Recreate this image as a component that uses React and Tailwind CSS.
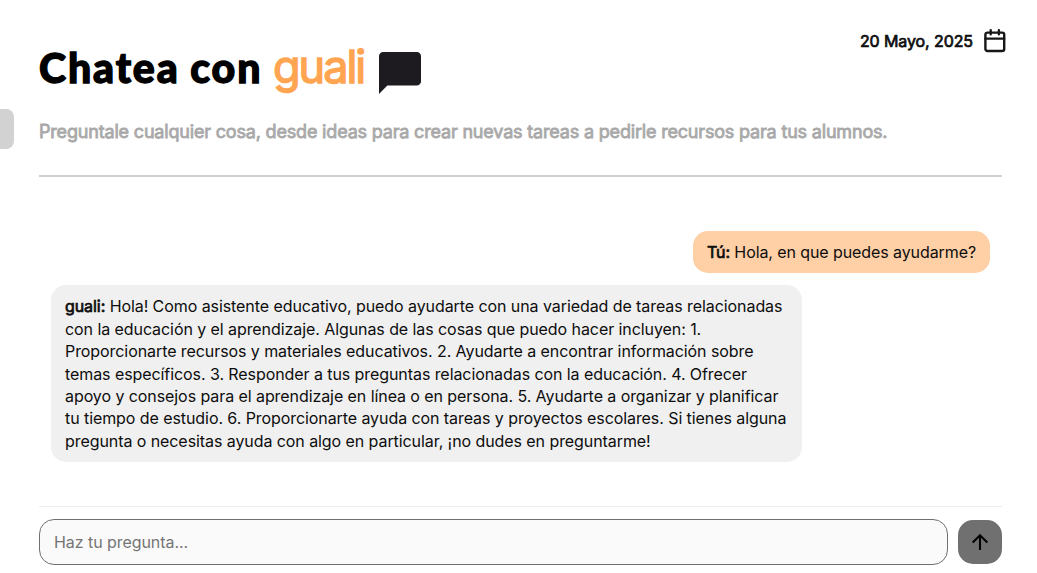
import React from "react";

function CalendarIcon() {
  return (
    <svg width="24" height="26" viewBox="0 0 24 26" fill="none" stroke="#171717" strokeWidth="2.4" strokeLinejoin="round" strokeLinecap="round">
      <rect x="2.4" y="4.6" width="18.8" height="18.4" rx="2" />
      <path d="M2.4 10.6h18.8M7.7 2.2v4M15.9 2.2v4" />
    </svg>
  );
}

function ChatIcon() {
  return (
    <svg width="42" height="42" viewBox="0 0 42 42" fill="#1d1b20">
      <path d="M0 42V4.2A4.2 4.2 0 0 1 4.2 0H37.8A4.2 4.2 0 0 1 42 4.2V29.4A4.2 4.2 0 0 1 37.8 33.6H8.4Z" />
    </svg>
  );
}

function ArrowUpIcon() {
  return (
    <svg width="16" height="16" viewBox="0 0 16 16" fill="none" stroke="#000" strokeWidth="2.1">
      <path d="M8 16V1.2M0.7 8.6L8 1.3L15.3 8.6" />
    </svg>
  );
}

function Message({ author, own, children }) {
  return (
    <div
      className={
        "max-w-[80%] rounded-[15px] px-3.5 py-[10px] text-base leading-[22.4px] " +
        (own ? "self-end bg-[#ffd0a6] tracking-[-0.09px]" : "self-start bg-[#f0f0f0] tracking-[-0.075px]")
      }
    >
      <span className="[-webkit-text-stroke:0.7px_currentColor]">{author}:</span> {children}
    </div>
  );
}

export default function App() {
  return (
    <div className="relative flex h-[573px] w-full flex-col overflow-hidden bg-white pl-[39px] pr-[35px] font-['Inter',sans-serif] text-[#0d0d0d]">
      <div className="absolute left-0 top-[109px] h-10 w-3.5 rounded-r-lg bg-[#d2d2d2]" />
      <header className="flex h-[177px] shrink-0 flex-col border-b-2 border-[#d0d0d0]">
        <div className="flex h-[118px] items-start justify-between">
          <h1 className="flex items-start pt-[38px] text-black">
            <span className="w-[234px] whitespace-nowrap font-['Lato',sans-serif] text-[41px] font-black leading-[59px] tracking-[1.9px] [word-spacing:-1px] [-webkit-text-stroke:1.3px_currentColor]">Chatea con</span>
            <span className="w-[106px] text-[45px] leading-[58px] tracking-[-2px] text-[#ffa552] [-webkit-text-stroke:1.4px_currentColor]">guali</span>
            <span className="pt-[14px]"><ChatIcon /></span>
          </h1>
          <div className="-mr-[5px] flex items-center gap-[10px] pt-[28px] text-base leading-[26px] tracking-[-0.09px]">
            <span className="whitespace-nowrap [-webkit-text-stroke:0.7px_currentColor]">20 Mayo, 2025</span>
            <CalendarIcon />
          </div>
        </div>
        <p className="whitespace-nowrap text-[18px] leading-7 tracking-[-0.18px] text-[#a9a9a9] [-webkit-text-stroke:0.8px_currentColor]">
          Preguntale cualquier cosa, desde ideas para crear nuevas tareas a pedirle recursos para tus alumnos.
        </p>
      </header>
      <main className="flex min-h-0 flex-1 flex-col gap-3 px-3 pt-[54px]">
        <Message author="Tú" own>Hola, en que puedes ayudarme?</Message>
        <Message author="guali">
          Hola! Como asistente educativo, puedo ayudarte con una variedad de tareas relacionadas con la educación y el aprendizaje. Algunas de las cosas que puedo hacer incluyen: 1. Proporcionarte recursos y materiales educativos. 2. Ayudarte a encontrar información sobre temas específicos. 3. Responder a tus preguntas relacionadas con la educación. 4. Ofrecer apoyo y consejos para el aprendizaje en línea o en persona. 5. Ayudarte a organizar y planificar tu tiempo de estudio. 6. Proporcionarte ayuda con tareas y proyectos escolares. Si tienes alguna pregunta o necesitas ayuda con algo en particular, ¡no dudes en preguntarme!
        </Message>
      </main>
      <form className="flex h-[67px] shrink-0 items-start gap-[10px] border-t border-[#eeeeee] pt-3">
        <input
          className="h-[46px] min-w-0 flex-1 rounded-[15px] border border-[#707070] bg-[#fafafa] px-3.5 text-base tracking-[-0.06px] placeholder:text-[#757575]"
          placeholder="Haz tu pregunta..."
        />
        <button type="button" className="mt-px flex size-11 items-center justify-center rounded-[15px] bg-[#707070]">
          <ArrowUpIcon />
        </button>
      </form>
    </div>
  );
}
